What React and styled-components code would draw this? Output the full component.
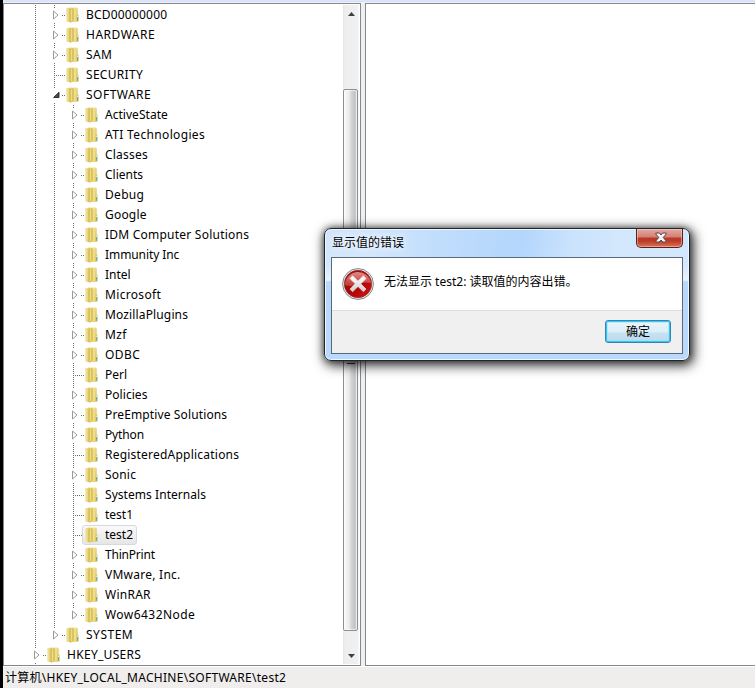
import React from 'react';
import styled, { createGlobalStyle, css } from 'styled-components';

const GlobalStyle = createGlobalStyle`
  * { box-sizing: border-box; }
  html, body { margin: 0; padding: 0; overflow: hidden; }
  body { font-family: "Noto Sans", "Noto Sans CJK SC", sans-serif; font-size: 12px; color: #000; }
`;

const Window = styled.div`
  position: relative;
  width: 755px;
  height: 688px;
  overflow: hidden;
  display: flex;
  background: #000;
  padding-left: 3px;
`;

const Frame = styled.div`
  flex: 1;
  display: flex;
  flex-direction: column;
  background: #f0f0f0;
`;

const TopEdge = styled.div`
  height: 3px;
  background: linear-gradient(#dde6f7 0 1px, #d5e0f4 1px 2px, #f0f2f8 2px);
`;

const Panes = styled.div`
  height: 664px;
  display: flex;
`;

const TreePane = styled.div`
  width: 358px;
  display: flex;
  background: #fff;
  border: 1px solid #828790;
`;

const Tree = styled.div`
  flex: 1;
  padding: 1px 0 0 22px;
  overflow: hidden;
`;

const Row = styled.div`
  height: 20px;
  display: flex;
  align-items: center;
`;

const dots = 'repeating-linear-gradient(to bottom, #6c6c6c 0 1px, transparent 1px 2px)';
const acrossDots = 'repeating-linear-gradient(to right, #6c6c6c 0 1px, transparent 1px 2px)';

const Guide = styled.div`
  width: ${({ $kind }) => ($kind === 'line' ? 19 : 20)}px;
  height: 20px;
  flex: none;
  display: flex;
  align-items: center;
  padding-left: 8px;
  background-repeat: no-repeat;
  ${({ $kind }) => $kind === 'line' && css`
    background-image: ${dots};
    background-size: 1px 20px;
    background-position: 9px 0;
  `}
  ${({ $kind }) => $kind === 'leaf' && css`
    background-image: ${dots}, ${acrossDots};
    background-size: 1px 20px, 11px 1px;
    background-position: 9px 0, 9px 10px;
  `}
  ${({ $kind, $last }) => $kind === 'node' && css`
    background-image: ${dots}, ${dots}, ${acrossDots};
    background-size: 1px 4px, 1px ${$last ? 0 : 3}px, 3px 1px;
    background-position: 9px 0, 9px 18px, 17px 10px;
  `}
`;

const Item = styled.div`
  height: 20px;
  display: flex;
  align-items: center;
  gap: 7px;
  margin-left: -2px;
  border: 1px solid transparent;
  border-radius: 3px;
  padding: 0 3px 0 2px;
  ${({ $selected }) => $selected && css`
    border-color: #d9d9d9;
    background: linear-gradient(#fafafa, #e6e6e6);
  `}
`;

const Label = styled.span`
  line-height: 18px;
  white-space: nowrap;
  padding-bottom: 1px;
  letter-spacing: ${({ $spacing }) => $spacing}px;
`;

const Drawing = styled.svg`
  display: block;
  flex: none;
`;

const ScrollTrack = styled.div`
  width: 16px;
  margin: 1px 1px 1px 0;
  display: flex;
  flex-direction: column;
  background: linear-gradient(to right, #e3e3e3 0, #eeeeee 2px, #f0f0f0 14px, #f8f8f8);
`;

const ScrollButton = styled.div`
  height: 17px;
  display: flex;
  align-items: center;
  justify-content: center;
`;

const ScrollThumb = styled.div`
  margin-top: ${({ $top }) => $top}px;
  height: 542px;
  width: 15px;
  border: 1px solid #8f8f8f;
  border-radius: 2px;
  background: linear-gradient(to right, #f8f8f8 0, #ececec 5px, #d6d6d9 7px, #c3c3c7 11px, #dcdcde);
  box-shadow: inset 0 0 0 1px rgba(255, 255, 255, 0.6);
  display: flex;
  align-items: center;
  justify-content: center;
`;

const Spacer = styled.div`
  flex: 1;
`;

const Splitter = styled.div`
  width: 4px;
  background: #f0f0f0;
`;

const ValuesPane = styled.div`
  flex: 1;
  background: #fff;
  border: 1px solid #828790;
  border-right: 0;
`;

const StatusBar = styled.div`
  flex: 1;
  background: #f0eded;
  border-top: 1px solid #fff;
  padding: 1px 0 0 2px;
  line-height: 20px;
  letter-spacing: 0.28px;
  white-space: nowrap;
`;

const Dialog = styled.div`
  position: absolute;
  left: 324px;
  top: 228px;
  width: 366px;
  height: 133px;
  border: 1px solid #1d262f;
  border-radius: 7px;
  padding: 0 6px 6px;
  background:
    linear-gradient(100deg, transparent 0 14%, #bfdcfc 34%, #b3d6fc 54%, #cbe3fd 68%, #d3e7fd 80%, transparent) 0 0 / 100% 28px no-repeat,
    linear-gradient(#cfe4fc 0, #d5e8fd 38px, #e9f4ff 51px, #b7d7fb 53px, #b9d9fd);
  box-shadow: inset 0 0 0 1px #eef7ff, 2px 3px 12px 2px rgba(0, 0, 0, 0.75), 0 0 6px rgba(0, 0, 0, 0.45);
`;

const TitleBar = styled.div`
  height: 28px;
  display: flex;
  justify-content: space-between;
  align-items: flex-start;
`;

const Title = styled.div`
  padding-left: 1px;
  line-height: 27px;
  text-shadow: 0 0 7px #fff, 0 0 9px #fff;
`;

const CloseButton = styled.div`
  width: 47px;
  height: 19px;
  display: flex;
  align-items: center;
  justify-content: center;
  padding: 0 0 1px 2px;
  border: 1px solid #5c2023;
  border-top: 0;
  border-radius: 0 0 5px 5px;
  background: linear-gradient(#e7aaa0 0, #d28075 8px, #bb3829 9px, #bd3a25 12px, #d7765b);
  box-shadow: inset 0 0 0 1px rgba(255, 218, 205, 0.45);
`;

const Client = styled.div`
  height: 97px;
  display: flex;
  flex-direction: column;
  border: 1px solid #59697a;
  background: #f0f0f0;
`;

const MessageArea = styled.div`
  height: 53px;
  display: flex;
  align-items: center;
  gap: 10px;
  padding-left: 10px;
  background: #fff;
  border-bottom: 1px solid #dfdfdf;
`;

const Message = styled.div`
  line-height: 18px;
  padding-bottom: 4px;
  white-space: nowrap;
`;

const Actions = styled.div`
  flex: 1;
  display: flex;
  justify-content: flex-end;
  padding: 9px 11px 0 0;
`;

const Button = styled.button`
  width: 66px;
  height: 23px;
  border: 1px solid #3c7fb1;
  border-radius: 3px;
  padding: 1px 0 0;
  font: inherit;
  line-height: 20px;
  color: #000;
  background: linear-gradient(#eaf5fb 0, #dceef8 11px, #c6e2f0 12px, #bbdaea);
  box-shadow: inset 0 0 0 1px #2fcbf5, inset 0 0 0 2px rgba(142, 223, 246, 0.5);
`;

function FolderIcon() {
  return (
    <Drawing width="13" height="16" viewBox="0 0 13 16">
      <defs>
        <linearGradient id="folderFlap" x1="0" x2="1">
          <stop offset="0" stopColor="#f2e7a6" />
          <stop offset="1" stopColor="#e3cd6c" />
        </linearGradient>
        <linearGradient id="folderBack" x1="0" x2="0" y1="0" y2="1">
          <stop offset="0" stopColor="#f0e296" />
          <stop offset="1" stopColor="#e2ca5f" />
        </linearGradient>
      </defs>
      <path d="M3 0.6H10.9L11.5 1.2V7L12.8 8V14L12 14.8H3Z" fill="url(#folderBack)" />
      <path d="M11.1 1.4V14.2" stroke="#cdb152" strokeWidth="0.6" />
      <path d="M7.6 1.4H9.8V14H7.6Z" fill="#efdf8c" />
      <path d="M0.2 1.2L3.9 0.8V15.2L0.8 14.8L0.2 14Z" fill="url(#folderFlap)" />
      <path d="M3.9 1.4L7.4 1V13.8L5 15.7L3.9 15.2Z" fill="#dfc661" />
      <path d="M4.1 1.8V15" stroke="#c6a644" strokeWidth="0.7" />
      <path d="M5.3 2.4V14.4" stroke="#f0e193" strokeWidth="1" />
      <path d="M7.3 1.8V13.6" stroke="#cfb14d" strokeWidth="0.6" />
      <path d="M11.6 10V13.6" stroke="#4fa9dc" strokeWidth="1" />
      <path d="M11.6 8.8V10" stroke="#fff6d5" strokeWidth="1" />
    </Drawing>
  );
}

function Expander({ open }) {
  return (
    <Drawing width="8" height="10" viewBox="0 0 8 10">
      {open ? (
        <path d="M6 2.2V7.5H0.6Z" fill="#4b4b4b" stroke="#262626" strokeWidth="0.9" />
      ) : (
        <path d="M0.5 1V9L5 5Z" fill="#fff" stroke="#9a9a9a" strokeWidth="1" />
      )}
    </Drawing>
  );
}

function ScrollArrow({ down }) {
  return (
    <Drawing width="7" height="4" viewBox="0 0 7 4">
      <path d={down ? 'M0 0H7L3.5 4Z' : 'M0 4H7L3.5 0Z'} fill="#404040" />
    </Drawing>
  );
}

function Grip() {
  return (
    <Drawing width="8" height="8" viewBox="0 0 8 8">
      <path d="M0 1.5H8M0 4.5H8" stroke="#777" />
      <path d="M0 7.5H8" stroke="#333" />
    </Drawing>
  );
}

function CloseGlyph() {
  return (
    <Drawing width="12" height="11" viewBox="0 0 12 11">
      <path
        d="M0.8 1H4.3L6 3L7.7 1H11.2V2L8.2 5.5L11.2 9V10H7.7L6 8L4.3 10H0.8V9L3.8 5.5L0.8 2Z"
        fill="#f4f4f4"
        stroke="#56474d"
        strokeWidth="1"
      />
    </Drawing>
  );
}

function ErrorIcon() {
  return (
    <Drawing width="32" height="32" viewBox="0 0 32 32">
      <defs>
        <linearGradient id="errTop" x1="0" y1="0" x2="0" y2="1">
          <stop offset="0" stopColor="#e08a86" />
          <stop offset="1" stopColor="#c43430" />
        </linearGradient>
        <linearGradient id="errBase" x1="0" y1="0" x2="1" y2="1">
          <stop offset="0.3" stopColor="#9c0b0d" />
          <stop offset="0.6" stopColor="#b50507" />
          <stop offset="1" stopColor="#d81517" />
        </linearGradient>
        <linearGradient id="errCross" x1="0" y1="0" x2="0" y2="1">
          <stop offset="0" stopColor="#fff" />
          <stop offset="1" stopColor="#cfcfcf" />
        </linearGradient>
      </defs>
      <circle cx="16" cy="16" r="15.4" fill="#f2f2f2" stroke="#858585" strokeWidth="1" />
      <circle cx="16" cy="16" r="13.7" fill="url(#errBase)" stroke="#8d3030" strokeWidth="0.7" />
      <path d="M2.8 17A13.3 13.3 0 0 1 29.2 15C23 13.5 18 15 14 17C10 18.5 6 18.5 2.8 17Z" fill="url(#errTop)" />
      <path
        d="M10.6 7.9L16 13.2L21.4 7.9L24 10.5L18.7 15.8L24 21.1L21.4 23.7L16 18.4L10.6 23.7L8 21.1L13.3 15.8L8 10.5Z"
        fill="url(#errCross)"
        stroke="url(#errCross)"
        strokeWidth="0.8"
        strokeLinejoin="round"
      />
    </Drawing>
  );
}

// name, depth, kind, letter spacing
const keys = [
  ['BCD00000000', 1, 'node', 0.2],
  ['HARDWARE', 1, 'node', 0.5],
  ['SAM', 1, 'node', 0.4],
  ['SECURITY', 1, 'leaf', 0.3],
  ['SOFTWARE', 1, 'open', 0.48],
  ['ActiveState', 2, 'node', 0.03],
  ['ATI Technologies', 2, 'node', 0.35],
  ['Classes', 2, 'node', 0.2],
  ['Clients', 2, 'node', 0],
  ['Debug', 2, 'node', 0.3],
  ['Google', 2, 'node', 0.2],
  ['IDM Computer Solutions', 2, 'node', 0.23],
  ['Immunity Inc', 2, 'node', -0.08],
  ['Intel', 2, 'node', 0],
  ['Microsoft', 2, 'node', 0.33],
  ['MozillaPlugins', 2, 'node', 0.14],
  ['Mzf', 2, 'node', 0.4],
  ['ODBC', 2, 'node', 0.4],
  ['Perl', 2, 'leaf', 0],
  ['Policies', 2, 'node', 0.05],
  ['PreEmptive Solutions', 2, 'node', 0.13],
  ['Python', 2, 'node', -0.15],
  ['RegisteredApplications', 2, 'leaf', 0.22],
  ['Sonic', 2, 'node', 0.2],
  ['Systems Internals', 2, 'leaf', 0.05],
  ['test1', 2, 'leaf', 0],
  ['test2', 2, 'leaf', 0],
  ['ThinPrint', 2, 'node', -0.2],
  ['VMware, Inc.', 2, 'node', 0.25],
  ['WinRAR', 2, 'node', 0.25],
  ['Wow6432Node', 2, 'node', 0.45],
  ['SYSTEM', 1, 'node', 0.5],
  ['HKEY_USERS', 0, 'node', 0.3],
];

const lastKeys = ['Wow6432Node', 'SYSTEM'];

function KeyRow({ name, depth, kind, spacing }) {
  const guide = kind === 'leaf' ? 'leaf' : 'node';
  return (
    <Row>
      {Array.from({ length: depth }, (_, i) => <Guide key={i} $kind="line" />)}
      <Guide $kind={guide} $last={lastKeys.includes(name)}>
        {kind !== 'leaf' && <Expander open={kind === 'open'} />}
      </Guide>
      <Item $selected={name === 'test2'}>
        <FolderIcon />
        <Label $spacing={spacing}>{name}</Label>
      </Item>
    </Row>
  );
}

export default function App() {
  return (
    <Window>
      <GlobalStyle />
      <Frame>
        <TopEdge />
        <Panes>
          <TreePane>
            <Tree>
              {keys.map(([name, depth, kind, spacing]) => (
                <KeyRow key={name} name={name} depth={depth} kind={kind} spacing={spacing} />
              ))}
            </Tree>
            <ScrollTrack>
              <ScrollButton><ScrollArrow /></ScrollButton>
              <ScrollThumb $top={67}><Grip /></ScrollThumb>
              <Spacer />
              <ScrollButton><ScrollArrow down /></ScrollButton>
            </ScrollTrack>
          </TreePane>
          <Splitter />
          <ValuesPane />
        </Panes>
        <StatusBar>计算机\HKEY_LOCAL_MACHINE\SOFTWARE\test2</StatusBar>
      </Frame>
      <Dialog>
        <TitleBar>
          <Title>显示值的错误</Title>
          <CloseButton><CloseGlyph /></CloseButton>
        </TitleBar>
        <Client>
          <MessageArea>
            <ErrorIcon />
            <Message>无法显示 test2: 读取值的内容出错。</Message>
          </MessageArea>
          <Actions>
            <Button>确定</Button>
          </Actions>
        </Client>
      </Dialog>
    </Window>
  );
}
